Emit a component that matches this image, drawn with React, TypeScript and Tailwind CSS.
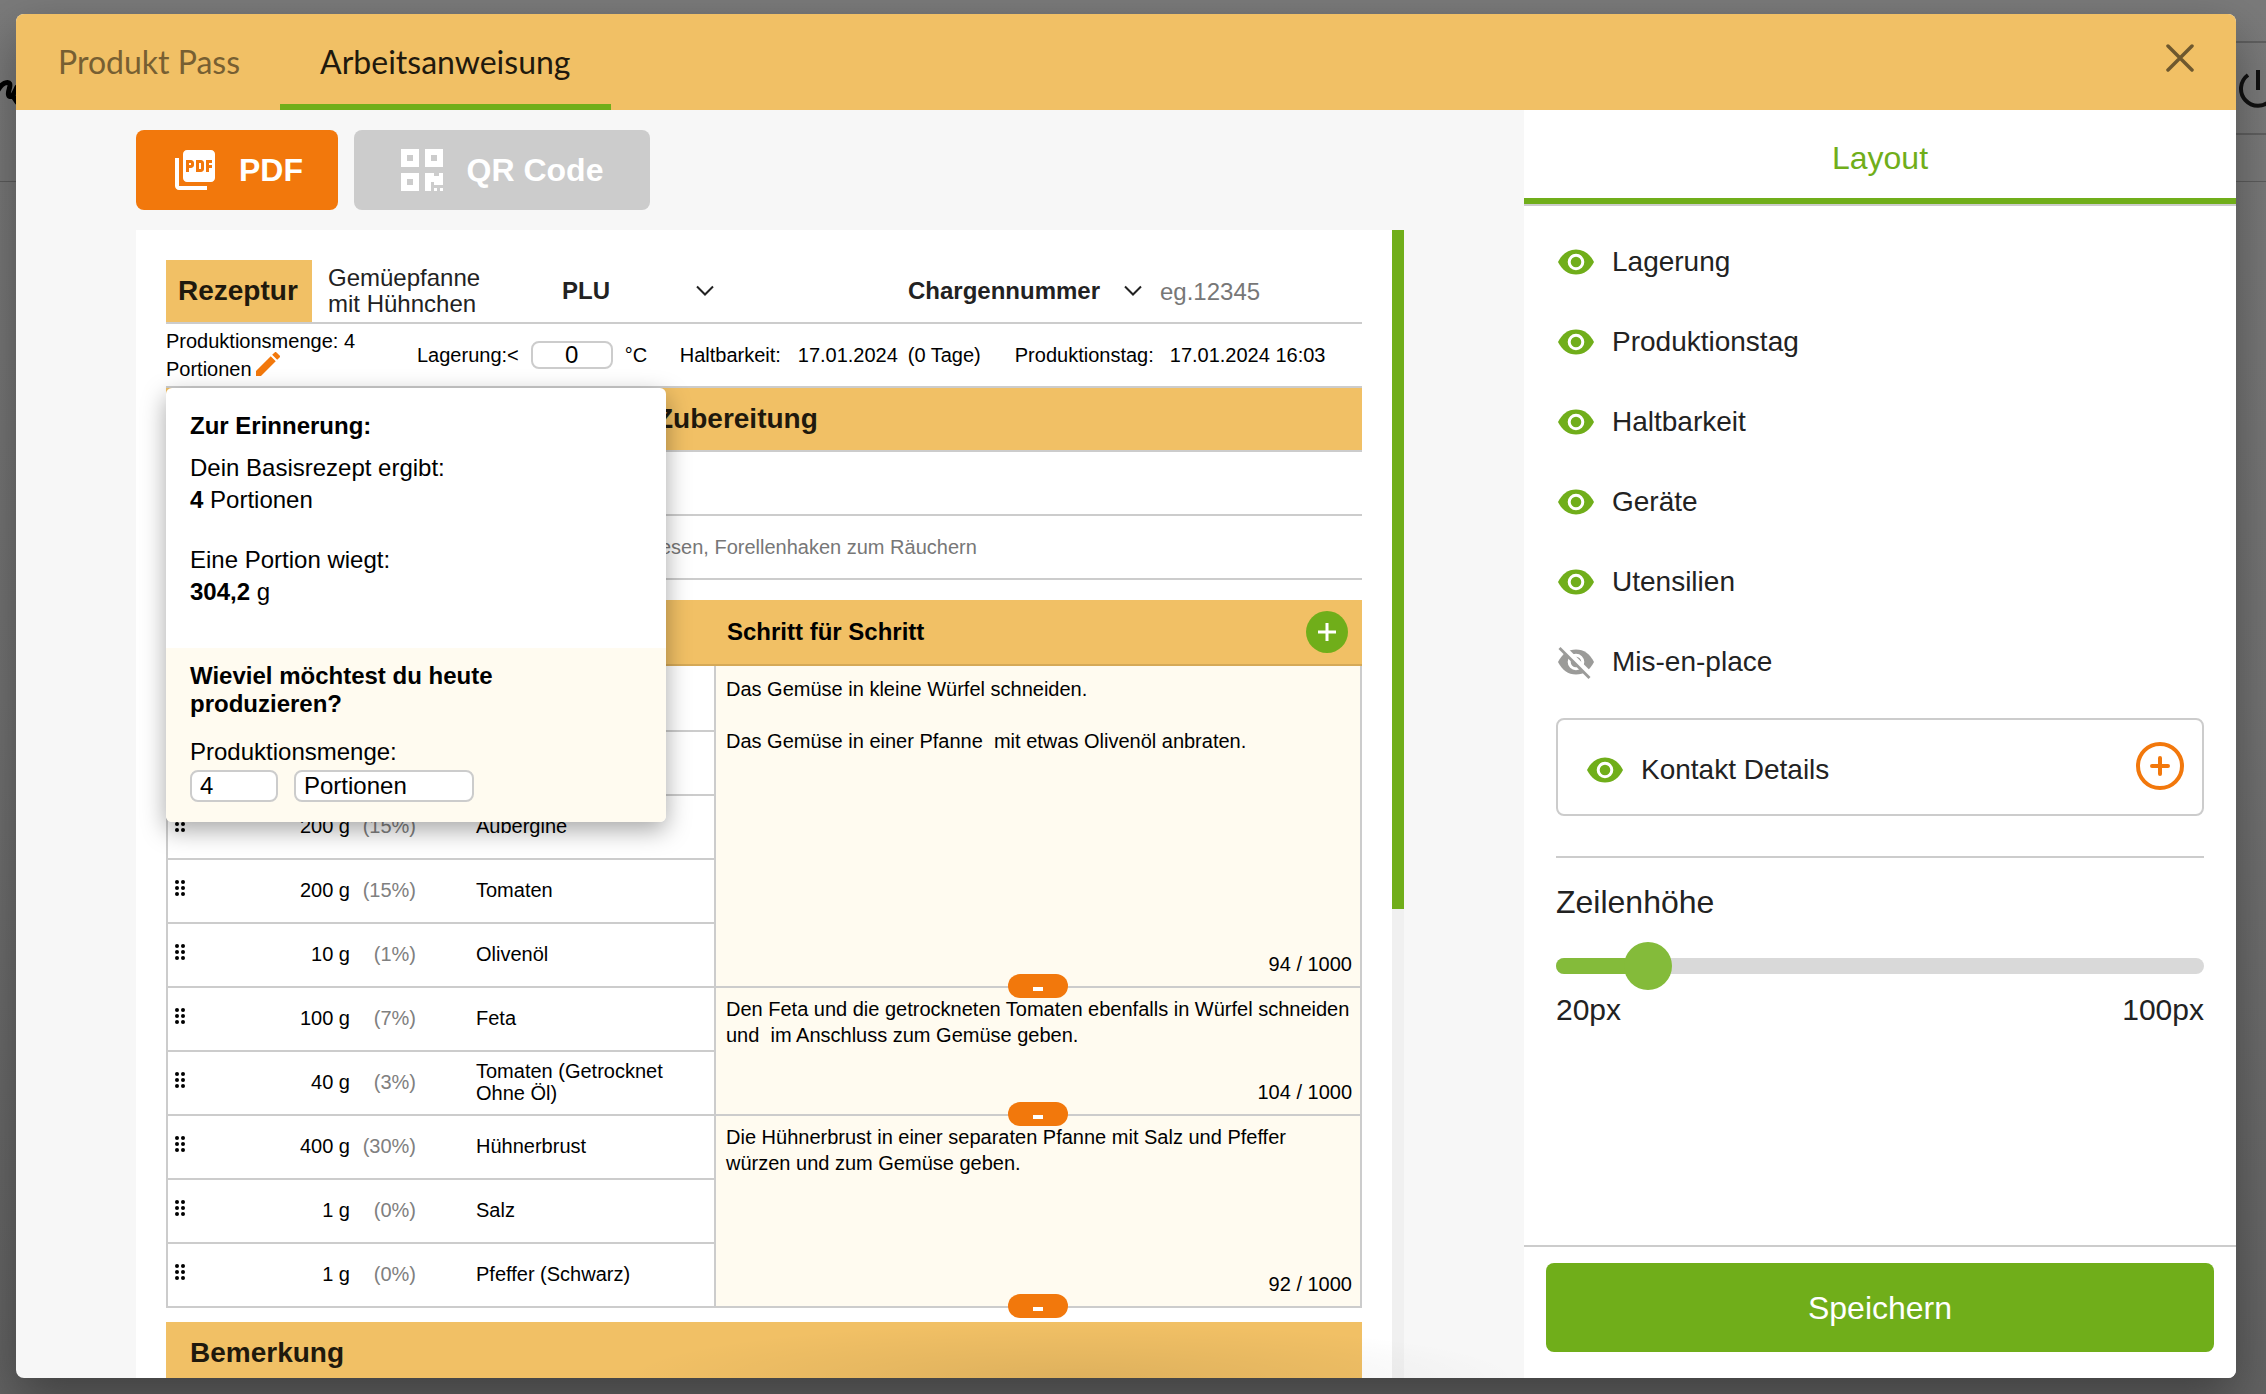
import { useState } from 'react';
import type { ReactNode } from 'react';
import { MdPictureAsPdf } from 'react-icons/md';

const INGREDIENTS = [
  { qty: '', pct: '', name: '' },
  { qty: '', pct: '', name: '' },
  { qty: '200 g', pct: '(15%)', name: 'Aubergine' },
  { qty: '200 g', pct: '(15%)', name: 'Tomaten' },
  { qty: '10 g', pct: '(1%)', name: 'Olivenöl' },
  { qty: '100 g', pct: '(7%)', name: 'Feta' },
  { qty: '40 g', pct: '(3%)', name: 'Tomaten (Getrocknet Ohne Öl)' },
  { qty: '400 g', pct: '(30%)', name: 'Hühnerbrust' },
  { qty: '1 g', pct: '(0%)', name: 'Salz' },
  { qty: '1 g', pct: '(0%)', name: 'Pfeffer (Schwarz)' },
];

const STEPS = [
  {
    text: 'Das Gemüse in kleine Würfel schneiden.\n\nDas Gemüse in einer Pfanne  mit etwas Olivenöl anbraten.',
    count: '94 / 1000',
    size: 'h-80',
  },
  {
    text: 'Den Feta und die getrockneten Tomaten ebenfalls in Würfel schneiden und  im Anschluss zum Gemüse geben.',
    count: '104 / 1000',
    size: 'h-32',
  },
  {
    text: 'Die Hühnerbrust in einer separaten Pfanne mit Salz und Pfeffer würzen und zum Gemüse geben.',
    count: '92 / 1000',
    size: 'h-48',
  },
];

const LAYOUT_ITEMS = [
  { label: 'Lagerung', visible: true },
  { label: 'Produktionstag', visible: true },
  { label: 'Haltbarkeit', visible: true },
  { label: 'Geräte', visible: true },
  { label: 'Utensilien', visible: true },
  { label: 'Mis-en-place', visible: false },
];

function Chevron() {
  return (
    <svg viewBox="0 0 18 12" className="h-3 w-[18px]" fill="none" stroke="#222" strokeWidth="2">
      <path d="M1 1.5 9 9.5 17 1.5" />
    </svg>
  );
}

function DragHandle() {
  return (
    <svg viewBox="0 0 10 16" className="h-4 w-[10px]" fill="#000">
      {[2, 8, 14].map((y) => (
        <g key={y}>
          <circle cx="2" cy={y} r="2" />
          <circle cx="8" cy={y} r="2" />
        </g>
      ))}
    </svg>
  );
}

function QrIcon() {
  return (
    <svg viewBox="0 0 42 42" className="size-[42px]" fill="#fff" fillRule="evenodd">
      <path d="M0 0h18v18H0zM6 6v6h6V6z" />
      <path d="M24 0h18v18H24zM30 6v6h6V6z" />
      <path d="M0 24h18v18H0zM6 30v6h6v-6z" />
      <path d="M24 24h9v3h5v-3h4v12h-9v-3h-3v9h-6z" />
      <path d="M33 39h3v3h-3zM39 39h3v3h-3z" />
    </svg>
  );
}

function PencilIcon() {
  return (
    <svg viewBox="3 3 18 18" className="size-6" fill="#f2780c">
      <path d="M3 17.25V21h3.75L17.81 9.94l-3.75-3.75zM20.71 7.04a1 1 0 0 0 0-1.41l-2.34-2.34a1 1 0 0 0-1.41 0l-1.83 1.83 3.75 3.75z" />
    </svg>
  );
}

function EyeIcon({ off = false }: { off?: boolean }) {
  return (
    <svg viewBox="0 0 40 40" className="size-10" fill={off ? '#9b9b99' : '#70ae1a'}>
      <path d="M2 20C6 12 12 7.500 20 7.500S34 12 38 20C34 28 28 32.500 20 32.500S6 28 2 20Z" />
      <circle cx="20" cy="20" r="6.800" fill="none" stroke="#fff" strokeWidth="3" />
      {off && (
        <>
          <path d="M5 3 37 35" stroke="#fff" strokeWidth="5" />
          <path d="M3.500 6 33.500 36" stroke="#9b9b99" strokeWidth="2.800" />
        </>
      )}
    </svg>
  );
}

function VisibilityRow({ label, visible }: { label: string; visible: boolean }) {
  return (
    <button type="button" aria-pressed={visible} className="flex items-center gap-4 text-left text-[28px] leading-10 text-[#222]">
      <EyeIcon off={!visible} />
      {label}
    </button>
  );
}

function RuledRow({ children }: { children?: ReactNode }) {
  return <div className="flex h-16 items-center border-b-2 border-[#ccc]">{children}</div>;
}

function Backdrop() {
  return (
    <div className="absolute inset-0 bg-linear-to-b from-[#7a7a7a] via-[#727272] to-[#626262]">
      <div className="absolute inset-x-0 top-[181px] h-px bg-[#5c5c5c]" />
      <div className="absolute right-0 top-[41px] h-0.5 w-10 bg-[#5f5f5f]" />
      <div className="absolute right-0 top-[133px] h-0.5 w-10 bg-[#5f5f5f]" />
      <svg viewBox="0 0 20 30" className="absolute left-0 top-[76px] h-[30px] w-5" fill="none" stroke="#000" strokeWidth="5" strokeLinecap="round" strokeLinejoin="round">
        <path d="M-2 14Q2 7 7 6.500 11 6 9.500 12 7 20 10 20.500 13 21 17 11M13 20l4 6" />
      </svg>
      <svg viewBox="0 0 40 40" className="absolute -right-3 top-[68px] size-10" fill="none" stroke="#111" strokeWidth="4">
        <path d="M10 7a17 17 0 1 0 20 0M20 2v20" />
      </svg>
    </div>
  );
}

function ReminderPopup() {
  return (
    <section
      aria-label="Produktionsmenge anpassen"
      className="absolute left-0 top-0 w-[500px] overflow-hidden rounded-md bg-white text-2xl text-black shadow-[0_8px_24px_rgba(0,0,0,0.35)]"
    >
      <div className="px-6 pb-10 pt-6">
        <h3 className="mb-3 leading-7 font-bold">Zur Erinnerung:</h3>
        <p>Dein Basisrezept ergibt:</p>
        <p className="mb-7">
          <b>4</b> Portionen
        </p>
        <p>Eine Portion wiegt:</p>
        <p>
          <b>304,2</b> g
        </p>
      </div>
      <div className="bg-[#fffbf0] px-6 pb-5 pt-3.5">
        <h3 className="mb-5 w-80 leading-7 font-bold">Wieviel möchtest du heute produzieren?</h3>
        <label htmlFor="menge" className="mb-1 block leading-7">
          Produktionsmenge:
        </label>
        <div className="flex gap-4">
          <input id="menge" defaultValue="4" className="h-8 w-[88px] rounded-lg border-2 border-[#ccc] bg-white px-2" />
          <input aria-label="Einheit" defaultValue="Portionen" className="h-8 w-[180px] rounded-lg border-2 border-[#ccc] bg-white px-2" />
        </div>
      </div>
    </section>
  );
}

function RecipeHead() {
  return (
    <div className="flex h-16 items-center border-b-2 border-[#ccc] text-2xl text-[#222]">
      <h1 className="flex h-full w-[146px] items-center bg-[#f1c065] pl-3 text-[28px] font-bold text-[#1f190d]">Rezeptur</h1>
      <p className="ml-4 w-[234px] pr-16 leading-[26px]">Gemüepfanne mit Hühnchen</p>
      <button type="button" className="flex w-[152px] items-center justify-between font-bold">
        PLU <Chevron />
      </button>
      <button type="button" className="ml-[194px] flex w-[234px] items-center justify-between font-bold">
        Chargennummer <Chevron />
      </button>
      <input aria-label="Chargennummer" placeholder="eg.12345" className="ml-4.5 w-40 min-w-0 pt-0.5 placeholder:text-[#777]" />
    </div>
  );
}

function RecipeMeta() {
  return (
    <div className="flex h-16 items-center border-b-2 border-[#ccc] text-xl text-black">
      <div className="w-[251px] pr-10 leading-7">
        Produktionsmenge: 4 Portionen
        <button type="button" aria-label="Menge bearbeiten" className="-mt-1 ml-1 inline-block">
          <PencilIcon />
        </button>
      </div>
      <label htmlFor="lagerung">Lagerung:&lt;</label>
      <input id="lagerung" defaultValue="0" className="ml-3 h-7 w-[82px] rounded-lg border-2 border-[#ccc] text-center text-2xl" />
      <span className="ml-3 w-[55px]">°C</span>
      <span className="w-[118px]">Haltbarkeit:</span>
      <span className="w-[110px]">17.01.2024</span>
      <span className="w-[107px]">(0 Tage)</span>
      <span className="w-[155px]">Produktionstag:</span>
      <span>17.01.2024 16:03</span>
    </div>
  );
}

function Ingredients() {
  return (
    <div className="w-[550px] border-x-2 border-[#ccc] pt-0.5">
      <table className="w-full table-fixed border-separate border-spacing-0 text-xl text-black">
        <colgroup>
          <col className="w-10" />
          <col className="w-[142px]" />
          <col className="w-[66px]" />
          <col />
        </colgroup>
        <tbody>
          {INGREDIENTS.map((item, index) => (
            <tr key={index} className="h-16">
              <td className="border-b-2 border-[#ccc] pb-1.5 pl-[7px]">
                <DragHandle />
              </td>
              <td className="border-b-2 border-[#ccc] pb-0.5 text-right">{item.qty}</td>
              <td className="border-b-2 border-[#ccc] pb-0.5 text-right text-[#808080]">{item.pct}</td>
              <td className="border-b-2 border-[#ccc] pr-10 pb-0.5 pl-[60px] leading-[22px]">{item.name}</td>
            </tr>
          ))}
        </tbody>
      </table>
    </div>
  );
}

function Steps() {
  return (
    <div className="flex-1 border-r-2 border-[#ccc] bg-[#fffbf0] pt-0.5 text-xl text-black">
      {STEPS.map((step) => (
        <div key={step.count} className={'relative flex flex-col justify-between border-b-2 border-[#ccc] pb-2 pl-2.5 pr-2 pt-2 ' + step.size}>
          <p className="leading-[26px] whitespace-pre-wrap">{step.text}</p>
          <p className="text-right leading-7">{step.count}</p>
          <button
            type="button"
            aria-label="Schritt entfernen"
            className="absolute -bottom-3 left-1/2 z-10 flex h-6 w-15 -translate-x-1/2 items-center justify-center rounded-xl bg-[#f2780c] pt-1.5"
          >
            <span className="h-1 w-2.5 bg-white" />
          </button>
        </div>
      ))}
    </div>
  );
}

function Document() {
  return (
    <div className="flex min-h-0 w-[1268px] flex-1 overflow-hidden">
      <div className="flex-1 bg-white px-[30px] pt-[30px]">
        <RecipeHead />
        <RecipeMeta />
        <div className="relative z-20">
          <ReminderPopup />
        </div>
        <div className="flex h-16 items-center border-b-2 border-[#ccc] bg-[#f1c065] pl-[490px] text-[28px] font-bold text-[#1f190d]">
          <h2>Zubereitung</h2>
        </div>
        <RuledRow />
        <RuledRow>
          <p className="pl-[415px] text-xl text-[#777]">Schneebesen, Forellenhaken zum Räuchern</p>
        </RuledRow>
        <div className="mt-5 flex h-[66px] items-center justify-between border-b-2 border-[#d5a957] bg-[#f1c065] pl-[561px] pr-3.5 text-2xl text-black">
          <h2 className="font-bold">Schritt für Schritt</h2>
          <button type="button" aria-label="Schritt hinzufügen" className="flex size-[42px] items-center justify-center rounded-full bg-[#70ae1a]">
            <svg viewBox="0 0 18 18" className="size-[18px]" stroke="#fff" strokeWidth="3">
              <path d="M9 0v18M0 9h18" />
            </svg>
          </button>
        </div>
        <div className="flex">
          <Ingredients />
          <Steps />
        </div>
        <div className="mt-3.5 h-24 bg-[#f1c065] px-6 pt-2.5 text-[28px] font-bold text-[#1f190d]">
          <h2>Bemerkung</h2>
        </div>
      </div>
      <div className="w-3 bg-[#f0f0f0]">
        <div className="h-[679px] bg-[#70ae1a]" />
      </div>
    </div>
  );
}

function LayoutPanel() {
  const [height, setHeight] = useState(29);
  const share = ((height - 20) / 80) * 100;
  return (
    <aside className="flex w-[712px] shrink-0 flex-col bg-white text-[#222]">
      <button type="button" className="h-[94px] border-b-6 border-[#70ae1a] pt-2 text-[32px] text-[#70ae1a]">
        Layout
      </button>
      <div className="flex flex-1 flex-col border-t-2 border-[#ccc] px-8 pt-9">
        <div className="flex flex-col items-start gap-10">
          {LAYOUT_ITEMS.map((item) => (
            <VisibilityRow key={item.label} {...item} />
          ))}
        </div>
        <div className="mt-9 flex items-start justify-between rounded-lg border-2 border-[#ccc] pb-6 pl-[27px] pr-[18px] pt-[22px]">
          <div className="pt-2">
            <VisibilityRow label="Kontakt Details" visible />
          </div>
          <button type="button" aria-label="Kontakt hinzufügen">
            <svg viewBox="0 0 48 48" className="size-12" fill="none" stroke="#f2780c" strokeWidth="4">
              <circle cx="24" cy="24" r="22" />
              <path d="M24 16v16M16 24h16" strokeLinecap="round" />
            </svg>
          </button>
        </div>
        <hr className="mt-10 border-t-2 border-[#ccc]" />
        <label htmlFor="zeilenhoehe" className="mt-6 text-[32px] leading-10">
          Zeilenhöhe
        </label>
        <div className="relative mt-5 flex h-12 items-center">
          <div className="h-4 flex-1 overflow-hidden rounded-full bg-[#d9d9d9]">
            <div className="h-full bg-[#84bb3a]" style={{ width: `${share}%` }} />
          </div>
          <input
            id="zeilenhoehe"
            type="range"
            min={20}
            max={100}
            value={height}
            onChange={(e) => setHeight(Number(e.target.value))}
            className="absolute inset-0 w-full appearance-none bg-transparent [&::-webkit-slider-thumb]:size-12 [&::-webkit-slider-thumb]:appearance-none [&::-webkit-slider-thumb]:rounded-full [&::-webkit-slider-thumb]:bg-[#84bb3a]"
          />
        </div>
        <div className="flex justify-between text-[30px] leading-10">
          <span>20px</span>
          <span>100px</span>
        </div>
      </div>
      <div className="border-t-2 border-[#ccc] px-[22px] pb-[26px] pt-4">
        <button type="button" className="h-[89px] w-full rounded-lg bg-[#70ae1a] text-[32px] text-white">
          Speichern
        </button>
      </div>
    </aside>
  );
}

export default function App() {
  return (
    <div className="relative h-screen overflow-hidden px-4 pb-4 pt-3.5 font-['Liberation_Sans',Arial,sans-serif]">
      <Backdrop />
      <main className="relative mr-3.5 flex h-full flex-col rounded-lg bg-[#f7f7f7] shadow-[0_20px_50px_rgba(0,0,0,0.35)]">
        <header className="flex h-24 shrink-0 items-stretch rounded-t-lg bg-[#f1c065] pl-0.5 font-[Lato,sans-serif] text-[32px]">
          <button type="button" className="border-y-6 border-transparent px-10 text-[#775f32]">
            Produkt Pass
          </button>
          <button type="button" className="border-y-6 border-t-transparent border-b-[#70ae1a] px-10 text-[#1f190d]">
            Arbeitsanweisung
          </button>
          <button type="button" aria-label="Schließen" className="mr-[42px] ml-auto self-center pb-2">
            <svg viewBox="0 0 28 28" className="size-7" stroke="#6e582e" strokeWidth="3.500" strokeLinecap="round">
              <path d="M2 2 26 26M26 2 2 26" />
            </svg>
          </button>
        </header>
        <div className="flex min-h-0 flex-1 overflow-hidden rounded-b-lg">
          <div className="relative flex min-w-0 flex-1 flex-col items-center pt-5">
            <div className="flex w-[1268px] gap-4 text-[32px] font-bold text-white">
              <button type="button" className="flex h-20 w-[202px] items-center justify-center gap-5 rounded-lg bg-[#f2780c]">
                <MdPictureAsPdf className="size-12" />
                PDF
              </button>
              <button type="button" className="flex h-20 w-[296px] items-center justify-center gap-6 rounded-lg bg-[#ccc]">
                <QrIcon />
                QR Code
              </button>
            </div>
            <div className="mt-5 flex min-h-0 flex-1">
              <Document />
            </div>
            <div className="pointer-events-none absolute right-0 bottom-0 h-14 w-3/5 bg-[radial-gradient(ellipse_at_bottom,rgba(0,0,0,0.08),transparent_70%)]" />
          </div>
          <LayoutPanel />
        </div>
      </main>
    </div>
  );
}
